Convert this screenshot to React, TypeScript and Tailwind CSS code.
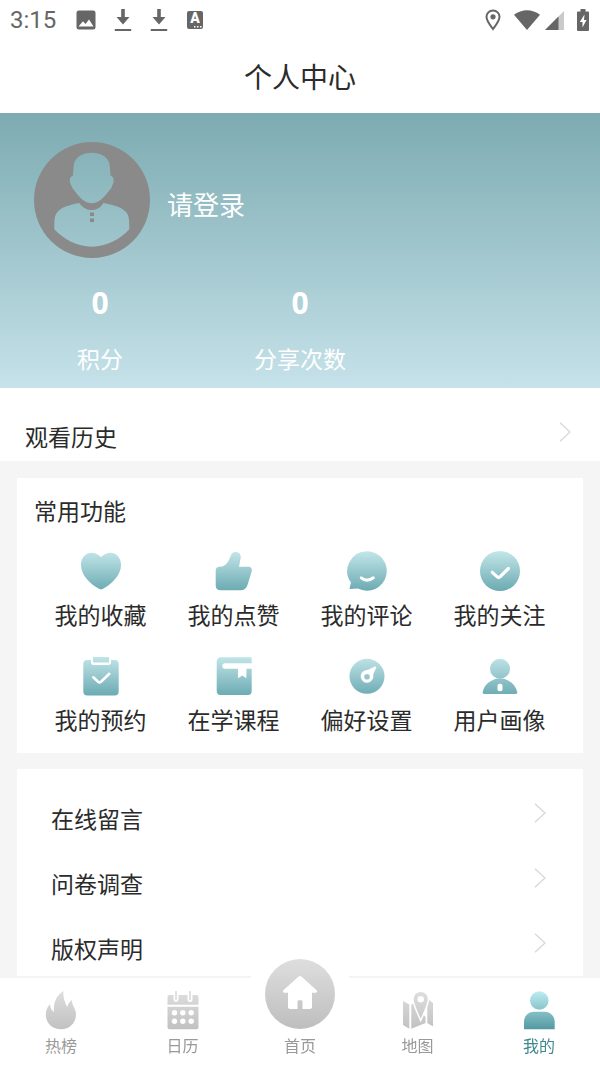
import { clsx } from "clsx"
import type { ReactNode } from "react"



type IconProps = {
    children: ReactNode
}

function FeatureIcon(props: IconProps) {
    return (
        <svg viewBox="0 0 40 40" className="h-10 w-10" aria-hidden="true">
            {props.children}
        </svg>
    )
}

function TabIcon(props: IconProps) {
    return (
        <svg viewBox="0 0 32 40" className="h-10 w-8" aria-hidden="true">
            {props.children}
        </svg>
    )
}

// Gradients shared by every icon on the page
function Gradients() {
    return (
        <svg className="absolute h-0 w-0" aria-hidden="true">
            <defs>
                <linearGradient id="teal" gradientUnits="userSpaceOnUse" x1="0" y1="0" x2="0" y2="40">
                    <stop offset="0" stopColor="#c3e6e9" />
                    <stop offset="1" stopColor="#6baab2" />
                </linearGradient>
                <linearGradient id="gray" gradientUnits="userSpaceOnUse" x1="0" y1="0" x2="0" y2="40">
                    <stop offset="0" stopColor="#dedede" />
                    <stop offset="1" stopColor="#c0c0c0" />
                </linearGradient>
                <linearGradient id="home" gradientUnits="userSpaceOnUse" x1="0" y1="0" x2="0" y2="70">
                    <stop offset="0" stopColor="#dedede" />
                    <stop offset="1" stopColor="#bebebe" />
                </linearGradient>
                <linearGradient id="active" gradientUnits="userSpaceOnUse" x1="0" y1="0" x2="0" y2="40">
                    <stop offset="0" stopColor="#bdedf1" />
                    <stop offset="1" stopColor="#50959e" />
                </linearGradient>
            </defs>
        </svg>
    )
}

const stats = [
    { label: "积分", value: 0 },
    { label: "分享次数", value: 0 },
]

const features = [
    {
        label: "我的收藏",
        icon: (
            <path fill="url(#teal)" d="M20 6.3C22.5 3.3 26 1.8 29.5 1.8 36 1.8 40 7.5 40 14c0 10-9 19-18 23.8q-2 1-4 0C9 33 0 24 0 14 0 7.5 4 1.8 10.5 1.8 14 1.8 17.5 3.3 20 6.3Z" />
        ),
    },
    {
        label: "我的点赞",
        icon: (
            <path fill="url(#teal)" d="M16.5 5.2C17.3 2.5 19 1 21.5 1c3.5 0 5.6 2.4 5.2 5.7L25 15.7h9c3 0 4.4 2 3.7 4.8L33.5 34c-1.2 3.6-3.5 5.3-7 5.3H6.7c-3.3 0-5-1.7-5-5V19.7c0-2.6 1.4-4 4-4 5.800 0 8.600-4.200 10.800-10.500Z" />
        ),
    },
    {
        label: "我的评论",
        icon: (
            <>
                <path fill="url(#teal)" d="M20 .3a19.7 19.7 0 1 1-9 37.2c-2.4.3-5 .4-7.2.5-1 0-1.4-.7-1.1-1.5L4 31.5A19.7 19.7 0 0 1 20 .3Z" />
                <path d="M14.300 26.800q5.700 4.600 12 0" fill="none" stroke="#fff" strokeWidth="3" strokeLinecap="round" />
            </>
        ),
    },
    {
        label: "我的关注",
        icon: (
            <>
                <circle cx="20" cy="20" r="20" fill="url(#teal)" />
                <path d="m12.3 21.3 4.900 4.600q1.500 1.300 3-.2l8.200-8.200" fill="none" stroke="#fff" strokeWidth="3.2" strokeLinecap="round" />
            </>
        ),
    },
    {
        label: "我的预约",
        icon: (
            <>
                <path fill="url(#teal)" d="M6.300 4H10v2.500C10 8 11 9 12.500 9h15C29 9 30 8 30 6.500V4h3.700a4 4 0 0 1 4 4v27.500a4 4 0 0 1-4 4H6.300a4 4 0 0 1-4-4V8a4 4 0 0 1 4-4Z" />
                <rect x="12" y="1" width="16" height="5.5" fill="url(#teal)" />
                <path d="m12.3 21.3 5.100 4.700q1.300 1 2.600-.2l8.300-8" fill="none" stroke="#fff" strokeWidth="2.6" strokeLinecap="round" />
            </>
        ),
    },
    {
        label: "在学课程",
        icon: (
            <path fill="url(#teal)" d="M7 1.300h30.700v6H11a2.700 2.700 0 0 0 0 5.400h13v9.600l4.200-2.800 4.200 2.800v-9.600h5.300V35a4 4 0 0 1-4 4H6.700a4 4 0 0 1-4-4V5.500C2.700 3 4.500 1.300 7 1.300Z" />
        ),
    },
    {
        label: "偏好设置",
        icon: (
            <>
                <circle cx="20" cy="20.3" r="17.5" fill="url(#teal)" />
                <path fill="#fff" d="M18.500 14.300c2.500-.2 4-1 5.500-2l4-1.700c1-.4 1.600.3 1.200 1.200L27 16.500c-.8 1.300-.8 3-.7 4.500a6.300 6.300 0 1 1-7.800-6.700Z" />
                <circle cx="20" cy="20.7" r="2.8" fill="url(#teal)" />
            </>
        ),
    },
    {
        label: "用户画像",
        icon: (
            <>
                <circle cx="20" cy="12.7" r="10" fill="url(#teal)" />
                <path fill="url(#teal)" d="M13 24c2-1 4.500-1.400 7-1.400s5 .4 7 1.400c5.500 2.200 9 6.500 10.300 12 .3 1.300-.3 2-1.600 2H4.300c-1.300 0-1.900-.7-1.600-2C4 30.500 7.500 26.200 13 24Z" />
                <rect x="17.500" y="27.700" width="5" height="7.500" rx="2" fill="#fff" />
            </>
        ),
    },
]

const services = ["在线留言", "问卷调查", "版权声明"]

const tabs = [
    {
        label: "热榜",
        icon: (
            <path fill="url(#gray)" d="M18.500 0c-.8 6 1.300 11 3.700 16 .7-3 2.300-5.300 4.800-7-.4 5.500 4 8 4 14.300 0 8.700-6.500 15-15 15s-15.200-6-15.200-15c0-4.300 1.700-7.300 4.200-10 .2 3.300 1.500 6 4 8-1-9.500 2.500-17 9.500-21.300Z" />
        ),
    },
    {
        label: "日历",
        icon: (
            <>
                <path fill="url(#gray)" d="M2.500 4h4v4.500a2.500 2.500 0 0 0 5 0V4h9v4.500a2.500 2.500 0 0 0 5 0V4h4a2 2 0 0 1 2 2v7.700H.5V6a2 2 0 0 1 2-2Z" />
                <path fill="url(#gray)" d="M.5 15.700h31v20.600a2 2 0 0 1-2 2h-27a2 2 0 0 1-2-2Z" />
                <path d="M9 .7v8M23 .7v8" stroke="#d8d8d8" strokeWidth="1.5" strokeLinecap="round" />
                <g fill="#fff">
                    <circle cx="7.5" cy="21.8" r="2.7" />
                    <circle cx="15.8" cy="21.8" r="2.7" />
                    <circle cx="24.2" cy="21.8" r="2.7" />
                    <circle cx="7.5" cy="30.2" r="2.7" />
                    <circle cx="15.8" cy="30.2" r="2.7" />
                    <circle cx="24.2" cy="30.2" r="2.7" />
                </g>
            </>
        ),
    },
    {
        label: "首页",
        isHome: true,
        icon: (
            <svg viewBox="0 0 70 70" className="h-[70px] w-[70px]" aria-hidden="true">
                <circle cx="35" cy="35" r="35" fill="url(#home)" />
                <path fill="#fff" d="M33.300 17.700q1.700-1.400 3.400 0L51.400 31c1.300 1.500.6 2.700-1 2.700H47V48c0 1.200-.8 2-2 2h-7.500v-7.500q0-1.200-1.200-1.200h-2.600q-1.200 0-1.200 1.200V50H25c-1.200 0-2-.8-2-2V33.700h-3.400c-1.600 0-2.300-1.200-1-2.700Z" />
            </svg>
        ),
    },
    {
        label: "地图",
        icon: (
            <>
                <path fill="url(#gray)" d="m1 10 6.300 3.500v24.300L1 34ZM9.300 13.500l3-1.500 11.200 14v6L9.300 37.800ZM25.300 12 27 9l4 3v23.500l-5.700-3.500Z" />
                <path
                    fill="url(#gray)"
                    stroke="#fff"
                    strokeWidth="1.5"
                    d="M18.700.2c4.400 0 7.800 3.300 7.800 7.700 0 5-4.300 13.500-7.800 21.600C15.200 21.400 10.900 12.900 10.900 7.900c0-4.400 3.400-7.700 7.800-7.700Z"
                />
                <circle cx="18.7" cy="8.3" r="3.2" fill="#fff" />
            </>
        ),
    },
    {
        label: "我的",
        isActive: true,
        icon: (
            <>
                <circle cx="16.3" cy="9.5" r="9.3" fill="url(#active)" />
                <path fill="url(#active)" d="M11 20.700h10.500c6 0 10.200 4.300 10.200 10.300v7.300H1V31c0-6 4-10.300 10-10.300Z" />
            </>
        ),
    },
]

function Chevron() {
    return (
        <svg viewBox="0 0 12 20" className="h-5 w-3" fill="none" stroke="#d8d8d8" strokeWidth="1.3" aria-hidden="true">
            <path d="m1 .7 10 9.300L1 19.300" />
        </svg>
    )
}

function StatusBar() {
    return (
        <div className="flex h-10 items-center justify-between pr-[11px] pl-[10px] text-[#666]">
            <div className="flex items-center gap-4">
                <span className="w-[49px] font-[Roboto] text-2xl">3:15</span>
                <svg viewBox="0 0 20 20" className="h-5 w-[22px]" fill="currentColor" aria-hidden="true">
                    <path fillRule="evenodd" d="M3 .5h14A2.500 2.500 0 0 1 19.500 3v14a2.500 2.500 0 0 1-2.500 2.500H3A2.500 2.500 0 0 1 .5 17V3A2.500 2.500 0 0 1 3 .5ZM2.500 16.500h15L13 9.500l-3.500 4.500-2.500-2.800Z" />
                </svg>
                {[0, 1].map((index) => (
                    <svg key={index} viewBox="0 0 20 24" className="h-6 w-5" fill="currentColor" aria-hidden="true">
                        <path d="M8.200 1h3.600v8h4.700L10 16.500 3.500 9h4.700ZM1.800 21h16.400v2H1.800Z" />
                    </svg>
                ))}
                <span className="ml-0.5 flex h-[18px] w-4 flex-col items-center rounded-xs bg-[#666] font-[Roboto] text-sm leading-[15px] font-black text-white">
                    A
                    <svg viewBox="0 0 8 2" className="mr-px h-0.5 w-2 self-end" fill="currentColor" aria-hidden="true">
                        <path d="M0 0h1.500v1.500H0ZM3 0h1.500v1.500H3ZM6 0h1.500v1.500H6Z" />
                    </svg>
                </span>
            </div>
            <div className="flex items-center gap-[13px]">
                <svg viewBox="0 0 16 22" className="h-[22px] w-4" aria-hidden="true">
                    <path fill="none" stroke="currentColor" strokeWidth="2" d="M8 1.500c3.800 0 6.500 2.800 6.500 6.300C14.500 12 11 16 8 20 5 16 1.500 12 1.500 7.800 1.500 4.300 4.200 1.500 8 1.500Z" />
                    <circle cx="8" cy="7.8" r="2.6" fill="currentColor" />
                </svg>
                <div className="flex items-end gap-[5px]">
                    <svg viewBox="0 0 26 20" className="h-5 w-[26px]" fill="currentColor" aria-hidden="true">
                        <path d="M0 4.800C8-1.300 18-1.300 26 4.800L13 20Z" />
                    </svg>
                    <svg viewBox="0 0 19 19" className="h-[19px] w-[19px]" fill="currentColor" aria-hidden="true">
                        <path opacity=".35" d="M19 0v19H0Z" />
                        <path d="M13.500 5.500V19H0Z" />
                    </svg>
                </div>
                <svg viewBox="0 0 12 22" className="h-[22px] w-3" aria-hidden="true">
                    <path fill="currentColor" d="M3.500 0h5v2.500H11q1 0 1 1v17.500q0 1-1 1H1q-1 0-1-1V3.500q0-1 1-1h2.500Z" />
                    <path fill="#fff" d="M7.500 5.500 2.800 13h2.700v5.500L9.500 11H7Z" />
                </svg>
            </div>
        </div>
    )
}

function Avatar() {
    return (
        <svg viewBox="0 0 116 116" className="h-[116px] w-[116px]" fill="#8a8a8a" aria-hidden="true">
            <path
                fillRule="evenodd"
                d="M58 0a58 58 0 1 1 0 116A58 58 0 0 1 58 0ZM57.700 10.700C46 10.700 39.500 17 39.500 26L39 33.500C36.500 34.500 35.200 37 36 40.500L38.700 46.500C43 51 48 61.300 57.700 61.300S72.500 51 77 46.500L79.500 40.500C80.300 37 79 34.500 76.500 33.500L76 26C76 17 69.500 10.700 57.700 10.700ZM45.300 61C34 63 26 66 23 70.500 20.500 74 20.300 77 20.300 87.300 30 97.500 43 104.700 57.700 104.700S86 97.500 95.300 87.300C95.300 77 95 74 92.500 70.500 89 66 81 63 69.300 61 66 66.500 62 68 57.700 68S49.500 66.500 45.300 61Z"
            />
            <rect x="56" y="70.5" width="4" height="3.5" />
            <rect x="56" y="76.5" width="4" height="3.5" />
        </svg>
    )
}

export default function App() {

    return (
        <div className="flex h-screen flex-col bg-white font-['Noto_Sans_CJK_SC',sans-serif] text-[23px] leading-10 text-[#2b2b2b]">
            <Gradients />
            <StatusBar />
            <h1 className="pt-4 pb-[17px] text-center text-[28px] leading-10">个人中心</h1>

            <main className="flex min-h-0 flex-1 flex-col overflow-y-auto bg-[#f5f5f5]">
                <section className="bg-linear-to-b from-[#7cabb1] to-[#c6e2ea] pt-[29px] pb-[10px] text-white">
                    <button type="button" className="flex items-center gap-[17px] pl-[34px] text-[26px]">
                        <Avatar />
                        <span className="pt-2">请登录</span>
                    </button>
                    <dl className="mt-[25px] grid grid-cols-3 text-center">
                        {stats.map((stat) => (
                            <div key={stat.label} className="flex flex-col-reverse gap-[15px]">
                                <dt>{stat.label}</dt>
                                <dd className="font-['Noto_Sans',sans-serif] text-3xl leading-10 font-bold">{stat.value}</dd>
                            </div>
                        ))}
                    </dl>
                </section>

                <a href="#history" className="flex items-center justify-between bg-white pt-7 pr-[29px] pb-[5px] pl-[25px]">
                    观看历史
                    <span className="pb-2">
                        <Chevron />
                    </span>
                </a>

                <section className="mx-[17px] mt-[17px] bg-white px-[17px] pt-3 pb-[14px]">
                    <h2>常用功能</h2>
                    <div className="mt-[21px] grid grid-cols-4 gap-y-[22px]">
                        {features.map((feature) => (
                            <a key={feature.label} href="#feature" className="flex flex-col items-center gap-[3px]">
                                <FeatureIcon>{feature.icon}</FeatureIcon>
                                {feature.label}
                            </a>
                        ))}
                    </div>
                </section>

                <section className="mx-[17px] mt-4 flex-1 bg-white pt-4 pr-[37px] pl-[34px]">
                    {services.map((service) => (
                        <a key={service} href="#service" className="flex h-[65px] items-center justify-between">
                            {service}
                            <span className="pb-[10px]">
                                <Chevron />
                            </span>
                        </a>
                    ))}
                </section>
            </main>

            <nav className="relative grid grid-cols-[122fr_121fr_114fr_121fr_122fr] items-end border-t-2 border-[#f4f4f4] bg-white pt-[13px] pb-[7px] text-base leading-7 text-[#999]">
                {tabs.map((tab) => (
                    <a
                        key={tab.label}
                        href="#tab"
                        aria-current={tab.isActive ? "page" : undefined}
                        className={clsx(
                            "flex flex-col items-center",
                            tab.isActive && "text-[#3f8791]",
                            tab.isHome && "-mt-8 w-[98px] justify-self-center gap-0.5 bg-white",
                        )}
                    >
                        {tab.isHome ? tab.icon : <TabIcon>{tab.icon}</TabIcon>}
                        {tab.label}
                    </a>
                ))}
            </nav>
        </div>
    )
}
